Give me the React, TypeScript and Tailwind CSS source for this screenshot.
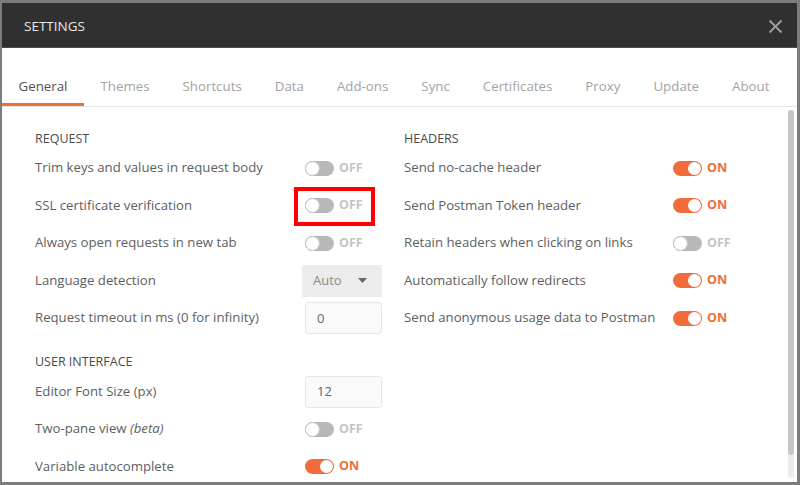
import React from 'react';

type Row =
  | { kind: 'toggle'; label: React.ReactNode; on: boolean }
  | { kind: 'select'; label: string; value: string }
  | { kind: 'input'; label: string; value: string };

const tabs = ['General', 'Themes', 'Shortcuts', 'Data', 'Add-ons', 'Sync', 'Certificates', 'Proxy', 'Update', 'About'];

const requestRows: Row[] = [
  { kind: 'toggle', label: 'Trim keys and values in request body', on: false },
  { kind: 'toggle', label: 'SSL certificate verification', on: false },
  { kind: 'toggle', label: 'Always open requests in new tab', on: false },
  { kind: 'select', label: 'Language detection', value: 'Auto' },
  { kind: 'input', label: 'Request timeout in ms (0 for infinity)', value: '0' },
];

const uiRows: Row[] = [
  { kind: 'input', label: 'Editor Font Size (px)', value: '12' },
  {
    kind: 'toggle',
    label: (
      <>
        Two-pane view <span className="italic">(beta)</span>
      </>
    ),
    on: false,
  },
  { kind: 'toggle', label: 'Variable autocomplete', on: true },
];

const headerRows: Row[] = [
  { kind: 'toggle', label: 'Send no-cache header', on: true },
  { kind: 'toggle', label: 'Send Postman Token header', on: true },
  { kind: 'toggle', label: 'Retain headers when clicking on links', on: false },
  { kind: 'toggle', label: 'Automatically follow redirects', on: true },
  { kind: 'toggle', label: 'Send anonymous usage data to Postman', on: true },
];

function Toggle({ on }: { on: boolean }) {
  return (
    <div className="flex items-center gap-[5px]">
      {on ? (
        <div className="flex h-[15px] w-[29px] items-center justify-end rounded-full bg-[#f26b3a] p-[1px]">
          <div className="h-[13px] w-[13px] rounded-full bg-white" />
        </div>
      ) : (
        <div className="flex h-[15px] w-[29px] items-center rounded-full bg-[#b8b8b8]">
          <div className="h-[15px] w-[15px] rounded-full border border-[#c2c2c2] bg-white" />
        </div>
      )}
      <span className={`text-[12.5px] font-bold ${on ? 'text-[#f26b3a]' : 'text-[#c4c4c4]'}`}>
        {on ? 'ON' : 'OFF'}
      </span>
    </div>
  );
}

function Control({ row }: { row: Row }) {
  if (row.kind === 'toggle') return <Toggle on={row.on} />;
  if (row.kind === 'select') {
    return (
      <div className="ml-[-3px] flex h-[32px] w-[80px] items-center justify-between bg-[#ececec] pl-[11px] pr-[15px] text-[13px] text-[#8a8a8a]">
        <span>{row.value}</span>
        <svg width="9" height="5" viewBox="0 0 9 5">
          <path d="M0 0 L9 0 L4.5 5 Z" fill="#666" />
        </svg>
      </div>
    );
  }
  return (
    <div className="flex h-[32px] w-[77px] items-center rounded-[3px] border border-[#e6e6e6] bg-[#fafafa] pl-[11px] text-[13px] text-[#666]">
      {row.value}
    </div>
  );
}

function Section({ title, rows, labelWidth, className = '' }: { title: string; rows: Row[]; labelWidth: string; className?: string }) {
  return (
    <div className={className}>
      <div className="flex h-[21px] items-center text-[12.5px] text-[#4a4a4a]">{title}</div>
      {rows.map((row, i) => (
        <div key={i} className="flex h-[37.5px] items-center">
          <div className={`${labelWidth} shrink-0 text-[13.2px] text-[#5e5e5e]`}>{row.label}</div>
          <Control row={row} />
        </div>
      ))}
    </div>
  );
}

export default function App() {
  return (
    <div
      className="h-[485px] w-[800px] overflow-hidden bg-[#7c7c7c] pb-[3px] pl-[2px] pr-[3px] pt-[3px]"
      style={{ fontFamily: '"Open Sans", "Noto Sans", sans-serif' }}
    >
      <div className="relative flex h-full flex-col bg-white">
        {/* header */}
        <div className="flex h-[45px] shrink-0 items-center justify-between border-b border-[#4a4a4a] bg-[#303030] pl-[22px] pr-[14px] pt-[2px]">
          <span className="text-[13.5px] text-[#e8e8e8]">SETTINGS</span>
          <svg width="15" height="15" viewBox="0 0 15 15">
            <path d="M1.5 1.5 L13.5 13.5 M13.5 1.5 L1.5 13.5" stroke="#9c9c9c" strokeWidth="2" />
          </svg>
        </div>

        {/* tabs */}
        <div className="flex h-[59px] shrink-0 items-end border-b border-[#e6e6e6]">
          {tabs.map((tab, i) => (
            <div
              key={tab}
              className={`flex h-[40px] items-center border-b-[3px] px-[16.5px] pt-[4px] text-[13.3px] ${
                i === 0 ? 'border-[#f26b3a] text-[#505050]' : 'border-transparent text-[#a3a3a3]'
              }`}
            >
              {tab}
            </div>
          ))}
        </div>

        {/* content */}
        <div className="flex min-h-0 flex-1">
          <div className="flex flex-1 pl-[33px] pt-[21.5px]">
            <div className="w-[369px] shrink-0">
              <Section title="REQUEST" rows={requestRows} labelWidth="w-[270px]" />
              <Section title="USER INTERFACE" rows={uiRows} labelWidth="w-[270px]" className="mt-[15px]" />
            </div>
            <Section title="HEADERS" rows={headerRows} labelWidth="w-[269px]" />
          </div>
          <div className="mb-[4px] mr-[3px] mt-[3px] flex w-[6px] flex-col rounded-full bg-[#ececec]">
            <div className="h-[345px] rounded-full bg-[#c6c6c6]" />
          </div>
        </div>

        {/* annotation */}
        <div className="absolute left-[292px] top-[184px] h-[39px] w-[81px] border-4 border-[#ff0000]" />
      </div>
    </div>
  );
}
